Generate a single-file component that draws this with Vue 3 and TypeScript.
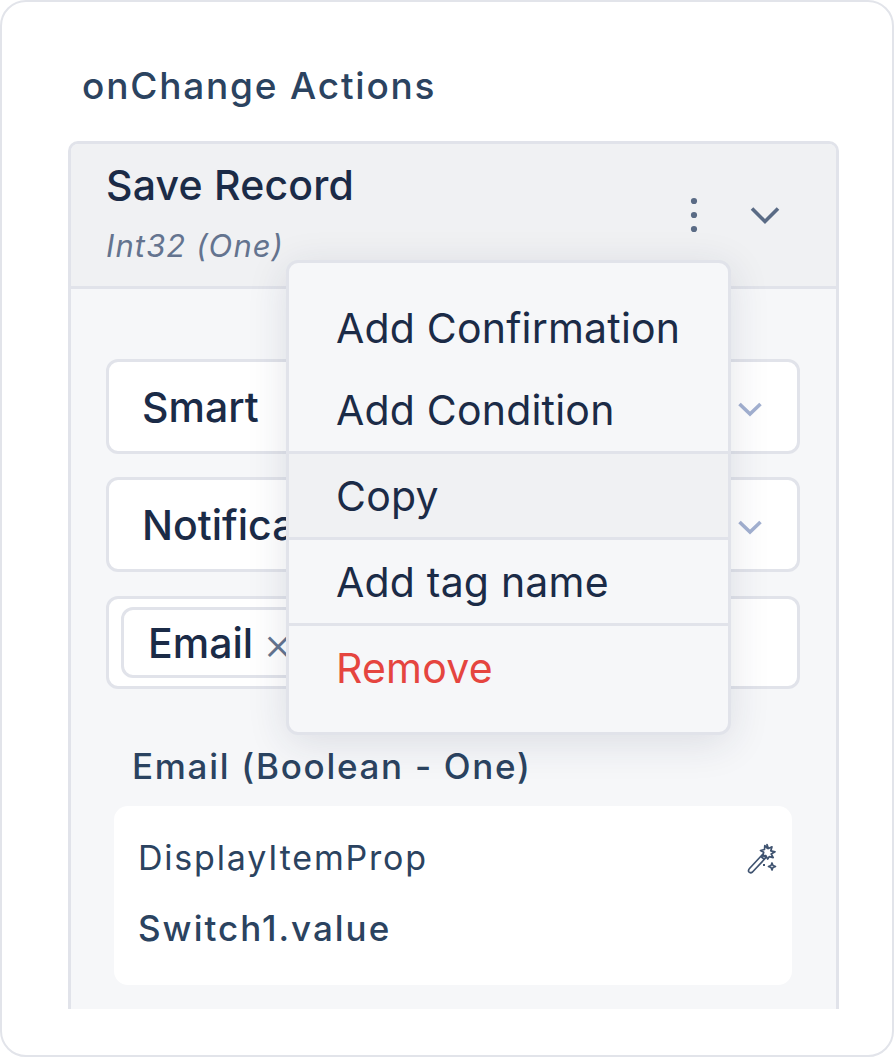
<script setup lang="ts">
const menuTop: string[] = ['Add Confirmation', 'Add Condition'];
</script>

<template>
  <div class="frame">
    <h2 class="title">onChange Actions</h2>
    <section class="panel">
      <header class="head">
        <div class="head-text">
          <div class="name">Save Record</div>
          <div class="type">Int32 (One)</div>
        </div>
        <div class="head-icons">
          <svg class="dots" width="10" height="38" viewBox="0 0 10 38"><circle cx="5" cy="5" r="3.100" /><circle cx="5" cy="19" r="3.100" /><circle cx="5" cy="33" r="3.100" /></svg>
          <svg class="chev" width="32" height="20" viewBox="0 0 32 20" fill="none"><path d="M3 3.500 16 16.500 29 3.500" stroke="#5a6b85" stroke-width="3.600" /></svg>
        </div>
      </header>
      <div class="body">
        <div class="select tall">
          <span>Smart</span>
          <svg class="sel-chev" width="26" height="16" viewBox="0 0 26 16" fill="none"><path d="M2.500 3 13 13 23.500 3" stroke="#a3b1d1" stroke-width="3.600" /></svg>
        </div>
        <div class="select tall">
          <span>Notifica</span>
          <svg class="sel-chev" width="26" height="16" viewBox="0 0 26 16" fill="none"><path d="M2.500 3 13 13 23.500 3" stroke="#a3b1d1" stroke-width="3.600" /></svg>
        </div>
        <div class="select tags">
          <div class="tag">Email<span class="x">×</span></div>
        </div>
        <div class="field-label">Email (Boolean - One)</div>
        <div class="card">
          <div class="card-row">
            <span class="prop">DisplayItemProp</span>
            <svg class="wand" width="34" height="34" viewBox="0 0 34 34" fill="none" stroke="#3f5370" stroke-width="1.700" stroke-linejoin="round">
              <path d="M4.500 26.500 17.500 12.500 21 15.500 7.500 30Q5.500 31.500 4 30 2.800 28.500 4.500 26.500Z" />
              <path d="M16 14.500l3.500 3" />
              <path d="M22 2.500l1.400 4 3.600-1.700-1.200 4 4.200 1-3.800 2.200 2 3.600-4-1-1.500 2.500-2-3.600-3 .6 1-3.800-3.200-1.800 4-1 .3-4 2.600 2.800z" />
              <path d="M18 23h2" stroke-width="2" />
              <path d="M27 21l1 2.500 2.500 1-2.500 1-1 2.500-1-2.500-2.500-1 2.500-1z" />
            </svg>
          </div>
          <div class="value">Switch1.value</div>
        </div>
      </div>
    </section>

    <div class="menu">
      <div class="group first">
        <div v-for="item in menuTop" :key="item" class="item">{{ item }}</div>
      </div>
      <div class="item single hover">Copy</div>
      <div class="item single">Add tag name</div>
      <div class="item danger">Remove</div>
    </div>
  </div>
</template>

<style>
html, body { margin: 0; background: #fff; }
</style>

<style scoped>
.frame {
  position: relative;
  box-sizing: border-box;
  width: 894px;
  height: 1057px;
  padding: 66px 55px 0 66px;
  border: 2px solid #e2e4ea;
  border-radius: 26px;
  background: #fff;
  font-family: Inter, "Liberation Sans", sans-serif;
  overflow: hidden;
}
.title {
  margin: 0 0 37px 14px;
  font-size: 37px;
  line-height: 36px;
  font-weight: 500;
  letter-spacing: 1.800px;
  color: #2b4360;
}
.panel {
  box-sizing: border-box;
  width: 771px;
  height: 868px;
  border: 3px solid #e1e3ea;
  border-bottom: 0;
  border-radius: 10px 10px 0 0;
  background: #f6f7f9;
}
.head {
  display: flex;
  justify-content: space-between;
  box-sizing: border-box;
  height: 145px;
  padding: 18px 55px 0 35px;
  background: #f0f1f3;
  border-bottom: 3px solid #e1e3ea;
  border-radius: 7px 7px 0 0;
}
.name {
  font-size: 41px;
  line-height: 46px;
  font-weight: 500;
  letter-spacing: 0.200px;
  color: #1b2b47;
}
.type {
  margin-top: 20px;
  font-size: 31px;
  line-height: 36px;
  font-style: italic;
  letter-spacing: 1.100px;
  color: #64748f;
}
.head-icons {
  display: flex;
  align-items: flex-start;
  gap: 50px;
  padding-top: 34px;
}
.dots { fill: #5a6b85; }
.chev { margin-top: 9px; }
.body {
  display: flex;
  flex-direction: column;
  padding: 70px 36px 0 35px;
}
.select {
  position: relative;
  display: flex;
  align-items: center;
  justify-content: space-between;
  box-sizing: border-box;
  border: 3px solid #e1e3ea;
  border-radius: 12px;
  background: #fff;
  color: #1b2b47;
}
.tall {
  height: 95px;
  margin-bottom: 23px;
  padding: 0 34px 0 33px;
  font-size: 41px;
  font-weight: 500;
}
.tall + .tall { margin-bottom: 24px; }
.sel-chev { margin-top: 5px; }
.tags {
  height: 93px;
  padding: 0 12px;
}
.tag {
  display: flex;
  align-items: center;
  box-sizing: border-box;
  height: 71px;
  width: 220px;
  padding-left: 24px;
  border: 3px solid #e1e3ea;
  border-radius: 12px;
  font-size: 41px;
  font-weight: 500;
}
.x {
  margin-left: 10px;
  font-size: 46px;
  font-weight: 300;
  color: #64748f;
}
.field-label {
  margin: 57px 0 0 26px;
  font-size: 35px;
  line-height: 40px;
  font-weight: 500;
  letter-spacing: 1.700px;
  color: #2b4360;
}
.card {
  box-sizing: border-box;
  width: 678px;
  height: 179px;
  margin: 20px 0 0 8px;
  padding: 26px 13px 0 24px;
  border-radius: 14px;
  background: #fff;
}
.card-row {
  display: flex;
  justify-content: space-between;
  align-items: center;
  height: 50px;
}
.prop {
  font-size: 34px;
  letter-spacing: 1.800px;
  color: #2b4360;
}
.wand { margin-top: 4px; }
.value {
  margin-top: 26px;
  font-size: 35px;
  line-height: 40px;
  font-weight: 500;
  letter-spacing: 2px;
  color: #2b4360;
}
.menu {
  position: absolute;
  left: 284px;
  top: 258px;
  box-sizing: border-box;
  width: 445px;
  height: 475px;
  padding-top: 24px;
  border: 3px solid #e1e3ea;
  border-radius: 12px;
  background: #f6f7f9;
  box-shadow: 0 8px 40px rgba(30, 40, 70, 0.12);
}
.first { border-bottom: 3px solid #e1e3ea; height: 164px; }
.item {
  box-sizing: border-box;
  height: 82px;
  padding: 0 47px;
  display: flex;
  align-items: center;
  font-size: 41px;
  letter-spacing: 0.200px;
  color: #1b2b47;
}
.single { height: 86px; border-bottom: 3px solid #e1e3ea; }
.hover { background: #f0f1f3; }
.danger { color: #e5453f; height: 86px; padding-bottom: 2px; }
</style>
